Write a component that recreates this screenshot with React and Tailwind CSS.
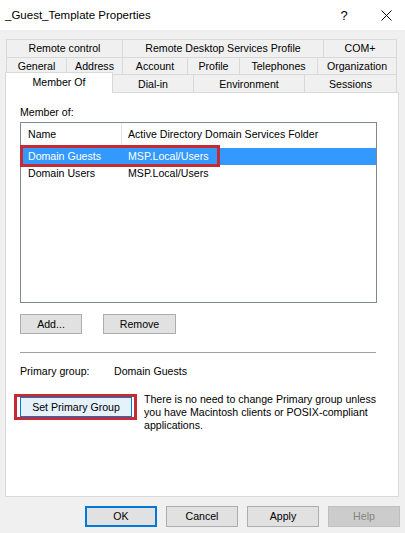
import React from 'react';

const font = { fontFamily: '"Liberation Sans", Arial, sans-serif' };

const row1 = [
  { label: 'Remote control', w: 'w-[117px]' },
  { label: 'Remote Desktop Services Profile', w: 'w-[201px]' },
  { label: 'COM+', w: 'w-[73px]' },
];

const row2 = [
  { label: 'General', w: 'w-[61px]' },
  { label: 'Address', w: 'w-[56px]' },
  { label: 'Account', w: 'w-[65px]' },
  { label: 'Profile', w: 'w-[52px]' },
  { label: 'Telephones', w: 'w-[78px]' },
  { label: 'Organization', w: 'w-[79px]' },
];

const row3 = [
  { label: 'Dial-in', w: 'w-[81px]' },
  { label: 'Environment', w: 'w-[111px]' },
  { label: 'Sessions', w: 'w-[92px]' },
];

const groups = [
  { name: 'Domain Guests', folder: 'MSP.Local/Users', selected: true },
  { name: 'Domain Users', folder: 'MSP.Local/Users', selected: false },
];

function TabRow({ tabs, h }) {
  return (
    <div className={`flex ml-[6px] ${h}`}>
      {tabs.map((t, i) => (
        <div
          key={t.label}
          className={`${t.w} h-full flex items-center justify-center border-t border-r border-[#d9d9d9] bg-[#f0f0f0] ${i === 0 ? 'border-l' : ''}`}
        >
          {t.label}
        </div>
      ))}
    </div>
  );
}

function Btn({ children, className = '' }) {
  return (
    <button className={`h-[20px] flex items-center justify-center border border-[#adadad] bg-[#e1e1e1] text-black ${className}`}>
      {children}
    </button>
  );
}

export default function App() {
  return (
    <div className="w-[405px] h-[533px] bg-[#f0f0f0] text-[10.6px] leading-[13px] text-black overflow-hidden" style={font}>
      {/* title bar */}
      <div className="h-[30px] bg-white flex items-center">
        <div className="pl-[5px] text-[11.5px] flex-1">_Guest_Template Properties</div>
        <div className="w-[20px] text-center text-[13px] mr-[27px]">?</div>
        <svg width="11" height="11" viewBox="0 0 11 11" className="mr-[13px]">
          <path d="M0.5 0.5 L10.5 10.5 M10.5 0.5 L0.5 10.5" stroke="#111" strokeWidth="1" />
        </svg>
      </div>

      {/* tabs */}
      <div className="pt-[9px]">
        <TabRow tabs={row1} h="h-[18px]" />
        <TabRow tabs={row2} h="h-[17px]" />
        <div className="flex items-end h-[18px] ml-[5px]">
          <div className="relative z-10 w-[108px] h-[21px] -mb-[1px] bg-white border-l border-t border-r border-[#d9d9d9] flex justify-center pt-[3px]">
            Member Of
          </div>
          {row3.map((t) => (
            <div key={t.label} className={`${t.w} h-full flex items-center justify-center border-t border-r border-[#d9d9d9] pt-[2px]`}>
              {t.label}
            </div>
          ))}
        </div>
      </div>

      {/* panel */}
      <div className="ml-[5px] w-[394px] h-[405px] bg-white border border-[#d9d9d9] pl-[14px] pt-[13px]">
        <div>Member of:</div>
        <div className="relative mt-[3px] w-[357px] h-[181px] border border-[#828790]">
          <div className="flex h-[23px]">
            <div className="w-[101px] border-r border-[#e5e5e5] pl-[7px] flex items-center">Name</div>
            <div className="pl-[6px] flex items-center">Active Directory Domain Services Folder</div>
          </div>
          <div className="mt-[2px]">
            {groups.map((g) => (
              <div key={g.name} className={`flex h-[17px] items-center ${g.selected ? 'bg-[#3399ff] text-white' : ''}`}>
                <div className="w-[107px] pl-[7px]">{g.name}</div>
                <div>{g.folder}</div>
              </div>
            ))}
          </div>
          <div className="absolute left-[-1px] top-[22px] w-[200px] h-[22px] border-[3px] border-[#c42b32]" />
        </div>

        <div className="flex gap-[21px] mt-[11px]">
          <Btn className="w-[62px]">Add...</Btn>
          <Btn className="w-[73px]">Remove</Btn>
        </div>

        <div className="mt-[18px] w-[356px] h-px bg-[#a0a0a0]" />

        <div className="flex mt-[12px]">
          <div className="w-[94px]">Primary group:</div>
          <div>Domain Guests</div>
        </div>

        <div className="flex items-start mt-[16px]">
          <div className="-ml-[6px] border-[3px] border-[#c42b32] pl-[3px] pr-[2px]">
            <button className="w-[112px] h-[20px] flex items-center justify-center border border-[#0078d7] bg-[#e5f1fb]">
              Set Primary Group
            </button>
          </div>
          <p className="ml-[7px] -mt-[1px]">
            There is no need to change Primary group unless
            <br />
            you have Macintosh clients or POSIX-compliant
            <br />
            applications.
          </p>
        </div>
      </div>

      {/* dialog buttons */}
      <div className="flex justify-end gap-[9px] pr-[5px] mt-[9px]">
        <button className="w-[72px] h-[21px] flex items-center justify-center border-2 border-[#0078d7] bg-[#e1e1e1]">OK</button>
        <button className="w-[72px] h-[21px] flex items-center justify-center border border-[#adadad] bg-[#e1e1e1]">Cancel</button>
        <button className="w-[72px] h-[21px] flex items-center justify-center border border-[#adadad] bg-[#e1e1e1]">Apply</button>
        <button className="w-[72px] h-[21px] flex items-center justify-center border border-[#bfbfbf] bg-[#cccccc] text-[#838383]">Help</button>
      </div>
    </div>
  );
}
